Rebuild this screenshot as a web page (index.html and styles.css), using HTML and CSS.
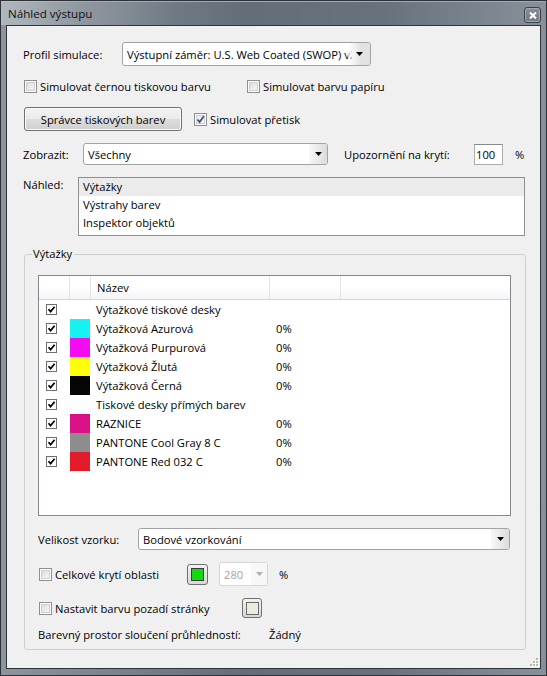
FILE: index.html
```html
<!DOCTYPE html>
<html lang="cs">
<head>
<meta charset="utf-8">
<title>Náhled výstupu</title>
<link rel="stylesheet" href="styles.css">
</head>
<body>
<div class="window">
  <div class="titlebar">
    <span class="title">Náhled výstupu</span>
    <span class="close"><svg width="8" height="7" viewBox="0 0 8 7"><path d="M1 0.5L7 6.5M7 0.5L1 6.5" stroke="#fff" stroke-width="2"/></svg></span>
  </div>
  <div class="client">
    <div class="row r-profile">
      <span class="lbl lbl-profile">Profil simulace:</span>
      <div class="combo combo-profile"><span class="combo-text">Výstupní záměr: U.S. Web Coated (SWOP) v2</span><span class="combo-btn fade"><svg class="arrow" width="7" height="4" viewBox="0 0 7 4"><path d="M0 0h7L3.5 4z"/></svg></span></div>
    </div>
    <div class="row r-sim">
      <label class="chk chk-black"><span class="cb"></span>Simulovat černou tiskovou barvu</label>
      <label class="chk"><span class="cb"></span>Simulovat barvu papíru</label>
    </div>
    <div class="row r-btn">
      <button class="btn" type="button">Správce tiskových barev</button>
      <label class="chk chk-over"><span class="cb checked"><svg width="9" height="9" viewBox="0 0 9 9"><path d="M1.5 4.5L3.6 7L7.8 1.2" fill="none" stroke="#3c4f86" stroke-width="1.8"/></svg></span>Simulovat přetisk</label>
    </div>
    <div class="row r-show">
      <span class="lbl lbl-show">Zobrazit:</span>
      <div class="combo combo-show"><span class="combo-text">Všechny</span><span class="combo-btn"><svg class="arrow" width="7" height="4" viewBox="0 0 7 4"><path d="M0 0h7L3.5 4z"/></svg></span></div>
      <span class="lbl lbl-warn">Upozornění na krytí:</span>
      <span class="field">100</span>
      <span class="pct">%</span>
    </div>
    <div class="row r-preview">
      <span class="lbl lbl-preview">Náhled:</span>
      <ul class="listbox">
        <li class="sel">Výtažky</li>
        <li>Výstrahy barev</li>
        <li>Inspektor objektů</li>
      </ul>
    </div>
    <fieldset class="group">
      <legend>Výtažky</legend>
      <div class="table">
        <div class="thead">
          <span class="th th-check"></span><span class="th th-sw"></span><span class="th th-name">Název</span><span class="th th-val"></span><span class="th th-rest"></span>
        </div>
        <div class="tr"><span class="td td-check"><span class="tcb"><svg width="9" height="9" viewBox="0 0 9 9"><path d="M1.5 4.3L3.6 6.6L7.6 1.8" fill="none" stroke="#000" stroke-width="1.7"/></svg></span></span><span class="td td-sw"></span><span class="td td-name">Výtažkové tiskové desky</span><span class="td td-val"></span></div>
        <div class="tr"><span class="td td-check"><span class="tcb"><svg width="9" height="9" viewBox="0 0 9 9"><path d="M1.5 4.3L3.6 6.6L7.6 1.8" fill="none" stroke="#000" stroke-width="1.7"/></svg></span></span><span class="td td-sw sw-cyan"></span><span class="td td-name">Výtažková Azurová</span><span class="td td-val">0%</span></div>
        <div class="tr"><span class="td td-check"><span class="tcb"><svg width="9" height="9" viewBox="0 0 9 9"><path d="M1.5 4.3L3.6 6.6L7.6 1.8" fill="none" stroke="#000" stroke-width="1.7"/></svg></span></span><span class="td td-sw sw-magenta"></span><span class="td td-name">Výtažková Purpurová</span><span class="td td-val">0%</span></div>
        <div class="tr"><span class="td td-check"><span class="tcb"><svg width="9" height="9" viewBox="0 0 9 9"><path d="M1.5 4.3L3.6 6.6L7.6 1.8" fill="none" stroke="#000" stroke-width="1.7"/></svg></span></span><span class="td td-sw sw-yellow"></span><span class="td td-name">Výtažková Žlutá</span><span class="td td-val">0%</span></div>
        <div class="tr"><span class="td td-check"><span class="tcb"><svg width="9" height="9" viewBox="0 0 9 9"><path d="M1.5 4.3L3.6 6.6L7.6 1.8" fill="none" stroke="#000" stroke-width="1.7"/></svg></span></span><span class="td td-sw sw-black"></span><span class="td td-name">Výtažková Černá</span><span class="td td-val">0%</span></div>
        <div class="tr"><span class="td td-check"><span class="tcb"><svg width="9" height="9" viewBox="0 0 9 9"><path d="M1.5 4.3L3.6 6.6L7.6 1.8" fill="none" stroke="#000" stroke-width="1.7"/></svg></span></span><span class="td td-sw"></span><span class="td td-name">Tiskové desky přímých barev</span><span class="td td-val"></span></div>
        <div class="tr"><span class="td td-check"><span class="tcb"><svg width="9" height="9" viewBox="0 0 9 9"><path d="M1.5 4.3L3.6 6.6L7.6 1.8" fill="none" stroke="#000" stroke-width="1.7"/></svg></span></span><span class="td td-sw sw-raznice"></span><span class="td td-name">RAZNICE</span><span class="td td-val">0%</span></div>
        <div class="tr"><span class="td td-check"><span class="tcb"><svg width="9" height="9" viewBox="0 0 9 9"><path d="M1.5 4.3L3.6 6.6L7.6 1.8" fill="none" stroke="#000" stroke-width="1.7"/></svg></span></span><span class="td td-sw sw-gray"></span><span class="td td-name">PANTONE Cool Gray 8 C</span><span class="td td-val">0%</span></div>
        <div class="tr"><span class="td td-check"><span class="tcb"><svg width="9" height="9" viewBox="0 0 9 9"><path d="M1.5 4.3L3.6 6.6L7.6 1.8" fill="none" stroke="#000" stroke-width="1.7"/></svg></span></span><span class="td td-sw sw-red"></span><span class="td td-name">PANTONE Red 032 C</span><span class="td td-val">0%</span></div>
      </div>
      <div class="row r-size">
        <span class="lbl lbl-size">Velikost vzorku:</span>
        <div class="combo combo-size"><span class="combo-text">Bodové vzorkování</span><span class="combo-btn"><svg class="arrow" width="7" height="4" viewBox="0 0 7 4"><path d="M0 0h7L3.5 4z"/></svg></span></div>
      </div>
      <div class="row r-cover">
        <label class="chk chk-cover"><span class="cb"></span>Celkové krytí oblasti</label>
        <span class="colorbtn"><span class="swatch swatch-green"></span></span>
        <div class="combo combo-dis"><span class="combo-text">280</span><span class="combo-btn"><svg class="arrow" width="7" height="4" viewBox="0 0 7 4"><path d="M0 0h7L3.5 4z"/></svg></span></div>
        <span class="pct pct2">%</span>
      </div>
      <div class="row r-bg">
        <label class="chk chk-bg"><span class="cb"></span>Nastavit barvu pozadí stránky</label>
        <span class="colorbtn colorbtn-sm"><span class="swatch swatch-paper"></span></span>
      </div>
      <div class="row r-blend">
        <span class="lbl lbl-blend">Barevný prostor sloučení průhledností:</span>
        <span>Žádný</span>
      </div>
    </fieldset>
    <span class="grip"><svg width="10" height="10" viewBox="0 0 10 10"><g fill="#fff"><rect x="8" y="2" width="2" height="2"/><rect x="5" y="5" width="2" height="2"/><rect x="8" y="5" width="2" height="2"/><rect x="2" y="8" width="2" height="2"/><rect x="5" y="8" width="2" height="2"/><rect x="8" y="8" width="2" height="2"/></g><g fill="#b8b8b8"><rect x="7" y="1" width="2" height="2"/><rect x="4" y="4" width="2" height="2"/><rect x="7" y="4" width="2" height="2"/><rect x="1" y="7" width="2" height="2"/><rect x="4" y="7" width="2" height="2"/><rect x="7" y="7" width="2" height="2"/></g></svg></span>
  </div>
</div>
</body>
</html>
```

FILE: styles.css
```css
* { box-sizing: border-box; }
html, body { margin: 0; padding: 0; }
body {
  width: 547px;
  height: 676px;
  overflow: hidden;
  font-family: "Open Sans", "Noto Sans", sans-serif;
  font-size: 11.2px;
  color: #000;
}
.window {
  width: 547px;
  height: 676px;
  display: flex;
  flex-direction: column;
  border: 1px solid #2c3238;
  padding: 0 5px 6px;
  background: linear-gradient(90deg, #8c949c 0%, #7a848d 20%, #636e79 45%, #67727d 70%, #88919a 100%);
  box-shadow: inset 0 1px #a3abb2;
}
.titlebar {
  height: 24px;
  margin: 0 -5px;
  padding: 0 5px 0 7px;
  display: flex;
  align-items: center;
  justify-content: space-between;
  background: linear-gradient(90deg, rgba(200,205,210,.6) 0%, rgba(170,177,184,.4) 14%, rgba(0,0,0,0) 32%);
}
.title { font-size: 11.6px; color: #111; margin-top: 1px; }
.close {
  width: 17px;
  height: 16px;
  margin-top: 4px;
  border: 1px solid #3a4047;
  border-radius: 3px;
  background: linear-gradient(#88919a, #707a84);
  box-shadow: inset 0 0 0 1px #a1a9b0;
  display: flex;
  align-items: center;
  justify-content: center;
}
.client {
  flex: 1;
  position: relative;
  background: #f0f0f0;
  border: 1px solid #2e343a;
  padding: 16px 14px 0 16px;
  display: flex;
  flex-direction: column;
  align-items: flex-start;
}
.row { display: flex; align-items: center; }
.lbl { white-space: nowrap; flex: none; }
.r-profile { height: 24px; margin-bottom: 12px; }
.lbl-profile { width: 99px; }
.combo {
  display: flex;
  align-items: center;
  border: 1px solid #a3a3a3;
  border-radius: 3px;
  background: #fff;
  overflow: hidden;
  flex: none;
}
.combo-text { flex: 1; white-space: nowrap; overflow: hidden; padding-left: 4px; }
.combo-btn {
  width: 18px;
  align-self: stretch;
  display: flex;
  align-items: center;
  justify-content: center;
  background: linear-gradient(90deg, #f7f7f7, #dcdcdc);
  flex: none;
}
.combo-btn.fade { background: linear-gradient(90deg, rgba(255,255,255,.6), #e2e2e2 60%); margin-left: -4px; width: 22px; }
.arrow path { fill: #000; }
.combo-profile { width: 249px; height: 24px; }
.r-sim { height: 16px; margin-bottom: 13px; }
.chk { display: flex; align-items: center; white-space: nowrap; flex: none; }
.cb {
  width: 13px;
  height: 13px;
  margin-right: 3px;
  border: 1px solid #8e8f8f;
  background: #f4f4f4;
  box-shadow: inset 0 0 0 1px #fff, inset 0 0 0 2px #cfcfcf;
  background-image: linear-gradient(135deg, #d8d8d8, #fbfbfb);
  display: flex;
  align-items: center;
  justify-content: center;
  flex: none;
}
.cb.checked { background-image: linear-gradient(135deg, #e2e6f0, #fbfbfb); }
.chk-black { width: 223px; margin-left: 1px; }
.r-btn { height: 24px; margin-bottom: 12px; }
.btn {
  width: 158px;
  height: 24px;
  margin-left: 1px;
  padding: 0;
  border: 1px solid #707070;
  border-radius: 3px;
  background: linear-gradient(#f2f2f2 0%, #ebebeb 48%, #dddddd 52%, #cfcfcf 100%);
  box-shadow: inset 0 0 0 1px #fbfbfb;
  font: inherit;
  color: #000;
}
.chk-over { margin-left: 12px; }
.r-show { height: 22px; margin-bottom: 12px; }
.lbl-show { width: 60px; }
.combo-show { width: 245px; height: 22px; }
.lbl-warn { margin-left: 16px; width: 130px; }
.field {
  width: 29px;
  height: 21px;
  border: 1px solid #abadb3;
  border-top-color: #8a8a8a;
  background: #fff;
  padding-left: 1px;
  line-height: 19px;
  flex: none;
}
.pct { margin-left: 12px; }
.r-preview { align-items: flex-start; }
.lbl-preview { width: 55px; line-height: 16px; }
.listbox {
  width: 447px;
  height: 59px;
  margin: 0;
  padding: 0;
  list-style: none;
  border: 1px solid #8e9096;
  background: #fff;
}
.listbox li { height: 18px; line-height: 18px; padding-left: 4px; }
.listbox li.sel { background: #ebebeb; }
.group {
  margin: 10px 0 0 1px;
  width: 502px;
  min-width: 0;
  border: 1px solid #cdd1d4;
  border-radius: 3px;
  padding: 13px 13px 7px 13px;
}
.group legend { margin-left: -6px; padding: 0 2px 0 1px; line-height: 16px; }
.table {
  width: 473px;
  height: 241px;
  border: 1px solid #828790;
  background: #fff;
}
.thead {
  display: flex;
  height: 24px;
  border-bottom: 1px solid #d5d5d5;
  background: linear-gradient(#fff 0%, #fff 45%, #f4f5f7 100%);
}
.th { border-right: 1px solid #e2e3e5; line-height: 23px; flex: none; }
.th-check { width: 31px; }
.th-sw { width: 21px; }
.th-name { width: 179px; padding-left: 6px; }
.th-val { width: 71px; }
.th-rest { flex: 1; border-right: none; }
.tr { display: flex; height: 19px; align-items: center; }
.td { flex: none; white-space: nowrap; }
.td-check { width: 31px; padding-left: 7px; display: flex; align-items: center; }
.tcb {
  width: 11px;
  height: 11px;
  border: 1px solid #6f6f6f;
  background: #fff;
  display: flex;
  align-items: center;
  justify-content: center;
}
.tcb svg { width: 9px; height: 9px; }
.td-sw { width: 20px; align-self: stretch; }
.sw-cyan { background: #16f2f2; }
.sw-magenta { background: #f40cf0; }
.sw-yellow { background: #fdfd08; }
.sw-black { background: #050505; }
.sw-raznice { background: #d91186; }
.sw-gray { background: #8d8d8d; }
.sw-red { background: #e31c2b; }
.td-name { width: 180px; padding-left: 6px; }
.td-val { padding-left: 6px; }
.r-size { margin-top: 12px; height: 22px; }
.lbl-size { width: 100px; }
.combo-size { width: 372px; height: 22px; }
.r-cover { margin-top: 12px; height: 24px; }
.chk-cover { width: 148px; margin-left: 1px; }
.colorbtn {
  width: 21px;
  height: 21px;
  border: 1px solid #707070;
  border-radius: 3px;
  background: linear-gradient(#f2f2f2, #d8d8d8);
  display: flex;
  align-items: center;
  justify-content: center;
  flex: none;
}
.colorbtn-sm { width: 20px; height: 20px; }
.swatch { width: 13px; height: 13px; border: 1px solid #3a3a3a; }
.swatch-green { background: #14d814; }
.swatch-paper { background: #ececdc; border-color: #6a6a6a; }
.combo-dis { margin-left: 11px; width: 49px; height: 24px; border-color: #d6d6d6; color: #a3a3a3; }
.combo-dis .combo-btn { background: #f7f7f7; width: 16px; }
.combo-dis .arrow path { fill: #b0b0b0; }
.pct2 { margin-left: 11px; }
.r-bg { margin-top: 12px; height: 20px; }
.chk-bg { width: 203px; margin-left: 1px; }
.r-blend { margin-top: 8px; height: 16px; }
.lbl-blend { width: 231px; }
.grip { position: absolute; right: 1px; bottom: 1px; width: 10px; height: 10px; display: flex; }
```
